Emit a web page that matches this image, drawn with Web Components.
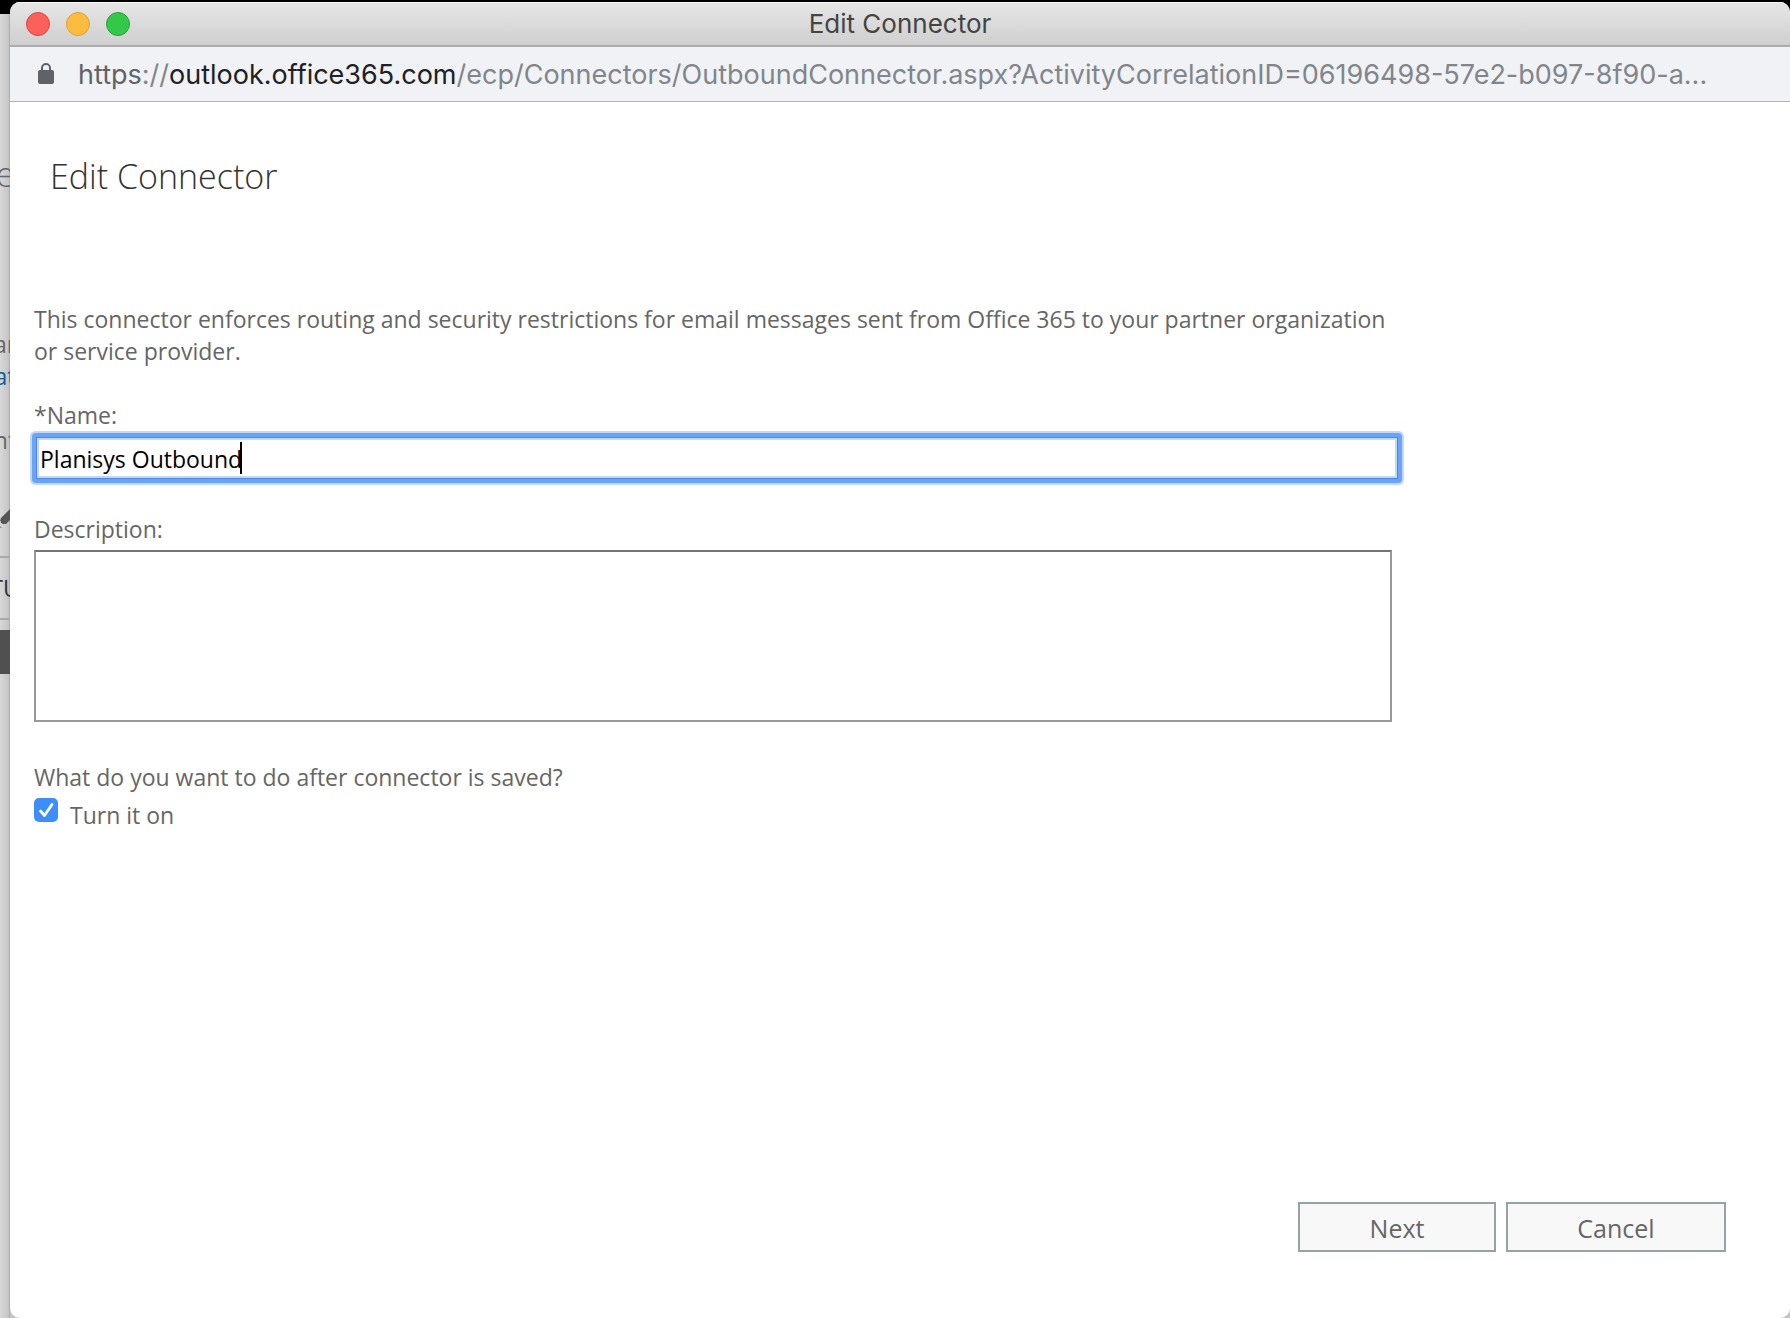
<!DOCTYPE html>
<html lang="en">
<head>
<meta charset="utf-8">
<title>Edit Connector</title>
<style>
    body {
        margin: 0;
        min-height: 100vh;
        display: grid;
        grid-template-columns: 10px 1fr;
        background: linear-gradient(#000 14px, #c4c4c4 14px);
        font-family: "Open Sans", "Noto Sans", sans-serif;
        color: #666;
    }
</style>
</head>
<body>
<page-behind></page-behind>
<popup-window heading="Edit Connector">
    <address-bar slot="address" scheme="https" host="outlook.office365.com" path="/ecp/Connectors/OutboundConnector.aspx?ActivityCorrelationID=06196498-57e2-b097-8f90-a..."></address-bar>
    <connector-form name="Planisys Outbound"></connector-form>
</popup-window>

<script>
class PageBehindElement extends HTMLElement {

    constructor() {
        super();
        this.attachShadow({ mode: 'open' });
        this.shadowRoot.innerHTML = `
            <style>
                :host {
                    display: flex;
                    flex-direction: column;
                    overflow: hidden;
                    margin-top: 14px;
                    background: linear-gradient(90deg, #d8d8d8, #c4c4c4 9px, #999);
                    font-size: 23px;
                    line-height: 32px;
                    color: #666;
                }
                div {
                    display: flex;
                    justify-content: center;
                }
                .heading {
                    margin: 136px 0 130px;
                    font-size: 34px;
                    font-weight: 300;
                    line-height: 48px;
                }
                .link {
                    color: #0f5c9e;
                    margin-bottom: 32px;
                }
                svg {
                    display: block;
                    margin: 52px 0 24px;
                }
                .column {
                    border: solid #a3abae;
                    border-width: 2px 0;
                    line-height: 60px;
                    color: #333;
                }
                .row {
                    height: 44px;
                    margin-top: 10px;
                    background: #505050;
                }
            </style>
            <div class="heading">e</div>
            <div>ar</div>
            <div class="link">at</div>
            <div>nt</div>
            <svg width="10" height="24" viewBox="0 0 10 24"><path d="M10 1 1 10q-2 4 2 6h3l4-4z" fill="#555"/><path d="M0 18l2 2H0z" fill="#888"/></svg>
            <div class="column">TU</div>
            <div class="row"></div>
        `;
    }

}

class PopupWindowElement extends HTMLElement {

    constructor() {
        super();
        this.attachShadow({ mode: 'open' });
        this.shadowRoot.innerHTML = `
            <style>
                :host {
                    display: flex;
                    flex-direction: column;
                    margin-top: 2px;
                    border-radius: 10px;
                    overflow: hidden;
                    background: #fff;
                }
                header {
                    display: grid;
                    grid-template-columns: 1fr auto 1fr;
                    align-items: center;
                    height: 43px;
                    padding: 0 16px;
                    border-bottom: 2px solid #adadad;
                    background: linear-gradient(#e6e6e6, #cfcfcf);
                    box-shadow: inset 0 1px #f6f6f6;
                    font: 26px Inter, Roboto, sans-serif;
                    color: #444;
                }
                .lights {
                    display: flex;
                    gap: 16px;
                }
                .lights button {
                    width: 24px;
                    height: 24px;
                    padding: 0;
                    border: 1px solid #e0443e;
                    border-radius: 50%;
                    background: #fc605b;
                }
                .lights .minimize {
                    border-color: #de9f34;
                    background: #fdbc40;
                }
                .lights .zoom {
                    border-color: #27a334;
                    background: #34c84a;
                }
                main {
                    flex: 1;
                    display: flex;
                    flex-direction: column;
                }
            </style>
            <header>
                <div class="lights">
                    <button class="close" aria-label="Close"></button>
                    <button class="minimize" aria-label="Minimize"></button>
                    <button class="zoom" aria-label="Zoom"></button>
                </div>
                <span class="title"></span>
            </header>
            <slot name="address"></slot>
            <main><slot></slot></main>
        `;
    }

    connectedCallback() {
        this.shadowRoot.querySelector('.title').textContent = this.getAttribute('heading');
    }

}

class AddressBarElement extends HTMLElement {

    constructor() {
        super();
        this.attachShadow({ mode: 'open' });
        this.shadowRoot.innerHTML = `
            <style>
                :host {
                    display: flex;
                    align-items: center;
                    gap: 24px;
                    height: 54px;
                    padding-left: 28px;
                    border-bottom: 1px solid #b0b2b5;
                    background: #f1f2f5;
                    font: 27px Inter, Roboto, sans-serif;
                    color: #80868b;
                    white-space: nowrap;
                }
                svg {
                    flex: none;
                }
                .scheme {
                    color: #5f6368;
                }
                .host {
                    color: #202124;
                }
            </style>
            <svg width="16" height="22" viewBox="0 0 16 22">
                <rect y="7" width="16" height="14" rx="2" fill="#5f6368"/>
                <path d="M4 8V5a4 4 0 0 1 8 0v3" fill="none" stroke="#5f6368" stroke-width="2"/>
            </svg>
            <div><span class="scheme"></span>://<span class="host"></span><span class="path"></span></div>
        `;
    }

    connectedCallback() {
        for (const part of ['scheme', 'host', 'path']) {
            this.shadowRoot.querySelector('.' + part).textContent = this.getAttribute(part);
        }
    }

}

class ConnectorFormElement extends HTMLElement {

    constructor() {
        super();
        this.attachShadow({ mode: 'open' });
        this.shadowRoot.innerHTML = `
            <style>
                :host {
                    flex: 1;
                    display: flex;
                    flex-direction: column;
                    padding: 50px 64px 66px 24px;
                    font-size: 23px;
                    line-height: 32px;
                }
                h1 {
                    margin: 0 16px 103px;
                    font-size: 34px;
                    font-weight: 300;
                    line-height: 48px;
                    color: #333;
                }
                form {
                    flex: 1;
                    display: flex;
                    flex-direction: column;
                }
                .fields {
                    display: flex;
                    flex-direction: column;
                    margin-right: 334px;
                }
                p {
                    margin: 0 0 32px;
                }
                .name {
                    position: relative;
                    display: flex;
                    margin: 4px -8px 32px 0;
                }
                .name input {
                    flex: 1;
                    box-sizing: border-box;
                    height: 46px;
                    padding: 2px 4px 0;
                    border: 2px solid #6ba4f5;
                    outline: none;
                    border-radius: 2px;
                    box-shadow: inset 0 0 0 1px #5088dc, inset 0 0 0 3px #c1d8fb,
                        0 0 0 2px #6ba4f5, 0 0 0 4px #c1d8fb;
                    font: inherit;
                    color: #000;
                }
                .caret {
                    position: absolute;
                    top: 7px;
                    left: 206px;
                    width: 2px;
                    height: 32px;
                    background: #000;
                }
                textarea {
                    box-sizing: border-box;
                    height: 172px;
                    margin: 5px 0 39px;
                    padding: 4px;
                    border: 2px solid #999;
                    border-top-color: #757575;
                    resize: none;
                    font: inherit;
                }
                .enable {
                    display: flex;
                    gap: 12px;
                    margin-top: 5px;
                }
                .enable input {
                    appearance: none;
                    width: 24px;
                    height: 24px;
                    margin: 0;
                    border-radius: 5px;
                    background: #3f8cfb;
                }
                .check {
                    display: grid;
                    height: 24px;
                }
                .check > * {
                    grid-area: 1 / 1;
                }
                .check svg {
                    pointer-events: none;
                }
                .enable label {
                    margin-top: 1px;
                }
                footer {
                    display: flex;
                    justify-content: flex-end;
                    gap: 10px;
                    margin-top: auto;
                }
                footer button {
                    width: 220px;
                    height: 50px;
                    padding: 2px 0 0;
                    border: 2px solid #95a3a5;
                    background: #f8f8f8;
                    font: inherit;
                    font-size: 25px;
                    color: #666;
                }
                footer .next {
                    width: 198px;
                }
            </style>
            <h1>Edit Connector</h1>
            <form>
                <div class="fields">
                    <p>This connector enforces routing and security restrictions for email messages sent from Office 365 to your partner organization or service provider.</p>
                    <label for="name">*Name:</label>
                    <div class="name">
                        <input id="name" type="text" spellcheck="false">
                        <span class="caret"></span>
                    </div>
                    <label for="description">Description:</label>
                    <textarea id="description"></textarea>
                    <span>What do you want to do after connector is saved?</span>
                    <div class="enable">
                        <div class="check">
                            <input id="enable" type="checkbox" checked>
                            <svg width="24" height="24" viewBox="0 0 24 24"><path d="M6.500 13l4 4.500L18 6.500" fill="none" stroke="#fff" stroke-width="2.800" stroke-linecap="round" stroke-linejoin="round"/></svg>
                        </div>
                        <label for="enable">Turn it on</label>
                    </div>
                </div>
                <footer>
                    <button type="button" class="next">Next</button>
                    <button type="button">Cancel</button>
                </footer>
            </form>
        `;
    }

    connectedCallback() {
        this.shadowRoot.querySelector('#name').value = this.getAttribute('name');
    }

}

customElements.define('page-behind', PageBehindElement);
customElements.define('popup-window', PopupWindowElement);
customElements.define('address-bar', AddressBarElement);
customElements.define('connector-form', ConnectorFormElement);
</script>
</body>
</html>
